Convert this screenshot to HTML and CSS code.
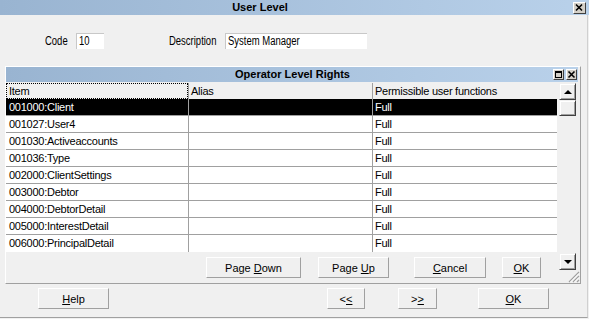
FILE: index.html
```html
<!DOCTYPE html>
<html>
	<head>
		<meta charset="UTF-8">
		<title>User Level</title>
		<link rel="stylesheet" href="styles.css">
	</head>
	<body>
		<div id="win">
			<div class="caption">
				<span class="caption-text">User Level</span>
				<span class="capbtn close">
					<svg width="11" height="10" viewBox="0 0 11 10"><path d="M2 1.5l6 6M8 1.5l-6 6" stroke="#000" stroke-width="1.6"/></svg>
				</span>
			</div>

			<div class="client">
				<div class="fields">
					<span class="lbl lbl-code"><span class="narrow">Code</span></span>
					<div class="edit edit-code"><span class="narrow">10</span></div>
					<span class="lbl lbl-desc"><span class="narrow">Description</span></span>
					<div class="edit edit-desc"><span class="narrow">System Manager</span></div>
				</div>

				<div id="rights">
					<div class="caption sub">
						<span class="caption-text">Operator Level Rights</span>
						<span class="capbtns">
							<span class="minibtn"><svg width="9" height="9" viewBox="0 0 9 9"><rect x="1.5" y="1.5" width="6" height="6" fill="none" stroke="#000"/><rect x="1" y="1" width="7" height="2" fill="#000"/></svg></span>
							<span class="minibtn"><svg width="9" height="9" viewBox="0 0 9 9"><path d="M1.5 1.5l6 6M7.5 1.5l-6 6" stroke="#000" stroke-width="1.6"/></svg></span>
						</span>
					</div>
					<div class="rights-body">
						<div class="left">
							<div class="grid">
								<div class="row head">
									<div class="c c1"><span class="focus">Item</span></div>
									<div class="c c2">Alias</div>
									<div class="c c3">Permissible user functions</div>
								</div>
								<div class="row sel"><div class="c c1">001000:Client</div><div class="c c2"></div><div class="c c3">Full</div></div>
								<div class="row"><div class="c c1">001027:User4</div><div class="c c2"></div><div class="c c3">Full</div></div>
								<div class="row"><div class="c c1">001030:Activeaccounts</div><div class="c c2"></div><div class="c c3">Full</div></div>
								<div class="row"><div class="c c1">001036:Type</div><div class="c c2"></div><div class="c c3">Full</div></div>
								<div class="row"><div class="c c1">002000:ClientSettings</div><div class="c c2"></div><div class="c c3">Full</div></div>
								<div class="row"><div class="c c1">003000:Debtor</div><div class="c c2"></div><div class="c c3">Full</div></div>
								<div class="row"><div class="c c1">004000:DebtorDetail</div><div class="c c2"></div><div class="c c3">Full</div></div>
								<div class="row"><div class="c c1">005000:InterestDetail</div><div class="c c2"></div><div class="c c3">Full</div></div>
								<div class="row"><div class="c c1">006000:PrincipalDetail</div><div class="c c2"></div><div class="c c3">Full</div></div>
							</div>
							<div class="btnrow inner">
								<button class="btn b-pgdn">Page <u>D</u>own</button>
								<button class="btn b-pgup">Page <u>U</u>p</button>
								<button class="btn b-cancel"><u>C</u>ancel</button>
								<button class="btn b-ok"><u>O</u>K</button>
							</div>
						</div>
						<div class="vscroll">
							<div class="sbtn up"><span class="tri"></span></div>
							<div class="thumb"></div>
							<div class="track"></div>
							<div class="sbtn down"><span class="tri"></span></div>
						</div>
					</div>
					<div class="grip">
						<svg width="12" height="12" viewBox="0 0 12 12">
							<path d="M11 1L1 11M11 5L5 11M11 9L9 11" stroke="#a0a0a0" stroke-width="1.2"/>
							<path d="M11 2.5L2.5 11M11 6.5L6.5 11" stroke="#fff" stroke-width="1"/>
						</svg>
					</div>
				</div>

				<div class="btnrow outer">
					<button class="btn b-help"><u>H</u>elp</button>
					<button class="btn b-prev">&lt;<u>&lt;</u></button>
					<button class="btn b-next">&gt;<u>&gt;</u></button>
					<button class="btn b-ok2"><u>O</u>K</button>
				</div>
			</div>
		</div>
	</body>
</html>
```

FILE: styles.css
```css
*{
	margin:0;
	padding:0;
	box-sizing:border-box;
}
body{
	background:#f0f0f0;
	font-family:"Liberation Sans",Arial,sans-serif;
	font-size:11px;
	color:#000;
	overflow:hidden;
}
div#win{
	width:589px;
	height:318px;
}
div.client{
	width:588px;
	height:303px;
	padding-top:18px;
	border-right:1px solid #d0d0d0;
	border-bottom:1px solid #a0a0a0;
}
/* title bars */
div.caption{
	display:flex;
	align-items:center;
	height:15px;
	background:linear-gradient(to right,#99b4d1,#b9d1ea);
	font-weight:bold;
}
div.caption .caption-text{
	flex:1;
	text-align:center;
	line-height:15px;
	padding-right:53px;
}
span.capbtn{
	display:flex;
	align-items:center;
	justify-content:center;
	width:13px;
	height:12px;
	margin-right:3px;
	background:#d4d0c8;
	border:1px solid;
	border-color:#fff #404040 #404040 #fff;
}
div.caption.sub{
	margin-bottom:1px;
}
div.caption.sub .caption-text{
	padding-right:0;
	padding-left:26px;
}
span.capbtns{
	display:flex;
	gap:2px;
	margin-right:1px;
}
span.minibtn{
	display:flex;
	align-items:center;
	justify-content:center;
	width:11px;
	height:11px;
	background:#d4d0c8;
	border:1px solid;
	border-color:#fff #404040 #404040 #fff;
}
/* code / description */
div.fields{
	display:flex;
	align-items:center;
	height:16px;
}
span.narrow{
	display:inline-block;
	font-size:12px;
	white-space:nowrap;
	transform:scaleX(.79);
	transform-origin:left center;
}
.lbl-code{
	margin-left:45px;
	width:31px;
}
.lbl-desc{
	margin-left:65px;
	width:56px;
}
div.edit{
	height:16px;
	line-height:15px;
	padding-left:2px;
	background:#fff;
	border-top:1px solid #c8c8c8;
	border-left:1px solid #c8c8c8;
	overflow:hidden;
}
.edit-code{
	width:28px;
}
.edit-desc{
	width:142px;
}
/* rights panel */
div#rights{
	position:relative;
	width:576px;
	height:218px;
	margin:17px 0 0 5px;
	padding-right:2px;
	border:1px solid;
	border-color:#fff #a0a0a0 #a0a0a0 #fff;
}
div.rights-body{
	display:flex;
	gap:2px;
}
div.left{
	width:551px;
}
div.grid{
	background:#fff;
}
div.row{
	display:flex;
	height:17px;
	border-bottom:1px solid #a0a0a0;
}
div.row:last-child{
	border-bottom:none;
}
div.row.head{
	height:16px;
	background:#f0f0f0;
	border-bottom:none;
}
div.row.sel{
	background:#000;
	color:#fff;
}
div.c{
	line-height:16px;
	padding-left:2px;
	letter-spacing:-.25px;
	white-space:nowrap;
	overflow:hidden;
}
div.c1{
	width:183px;
	padding-left:3px;
	border-right:1px solid #a0a0a0;
}
div.c2{
	width:184px;
	border-right:1px solid #a0a0a0;
}
div.c3{
	width:184px;
}
div.head div.c1{
	padding:0;
}
span.focus{
	display:block;
	height:16px;
	line-height:14px;
	padding-left:2px;
	border:1px dotted #000;
}
/* buttons */
div.btnrow{
	display:flex;
}
div.btnrow.inner{
	margin-top:5px;
}
div.btnrow.outer{
	margin-top:4px;
}
button.btn{
	height:21px;
	font-family:"Liberation Sans",Arial,sans-serif;
	font-size:11px;
	color:#000;
	background:#f0f0f0;
	border:1px solid;
	border-color:#fff #a0a0a0 #a0a0a0 #fff;
}
.b-pgdn{margin-left:200px;width:95px;}
.b-pgup{margin-left:17px;width:71px;}
.b-cancel{margin-left:25px;width:72px;}
.b-ok{margin-left:16px;width:39px;}
.b-help{margin-left:38px;width:71px;}
.b-prev{margin-left:218px;width:38px;}
.b-next{margin-left:33px;width:39px;}
.b-ok2{margin-left:41px;width:71px;}
/* scrollbar */
div.vscroll{
	display:flex;
	flex-direction:column;
	width:17px;
	height:187px;
}
div.sbtn,
div.thumb{
	height:17px;
	background:#f0f0f0;
	border:1px solid;
	border-color:#f0f0f0 #404040 #404040 #f0f0f0;
	box-shadow:inset 1px 1px 0 #fff,inset -1px -1px 0 #a0a0a0;
}
div.thumb{
	height:16px;
}
div.track{
	flex:1;
}
div.sbtn{
	display:flex;
	align-items:center;
	justify-content:center;
}
span.tri{
	width:0;
	height:0;
	border-left:4px solid transparent;
	border-right:4px solid transparent;
}
div.up span.tri{
	border-bottom:4px solid #000;
}
div.down span.tri{
	border-top:4px solid #000;
}
div.grip{
	position:absolute;
	right:0;
	bottom:0;
	width:12px;
	height:12px;
}
```
